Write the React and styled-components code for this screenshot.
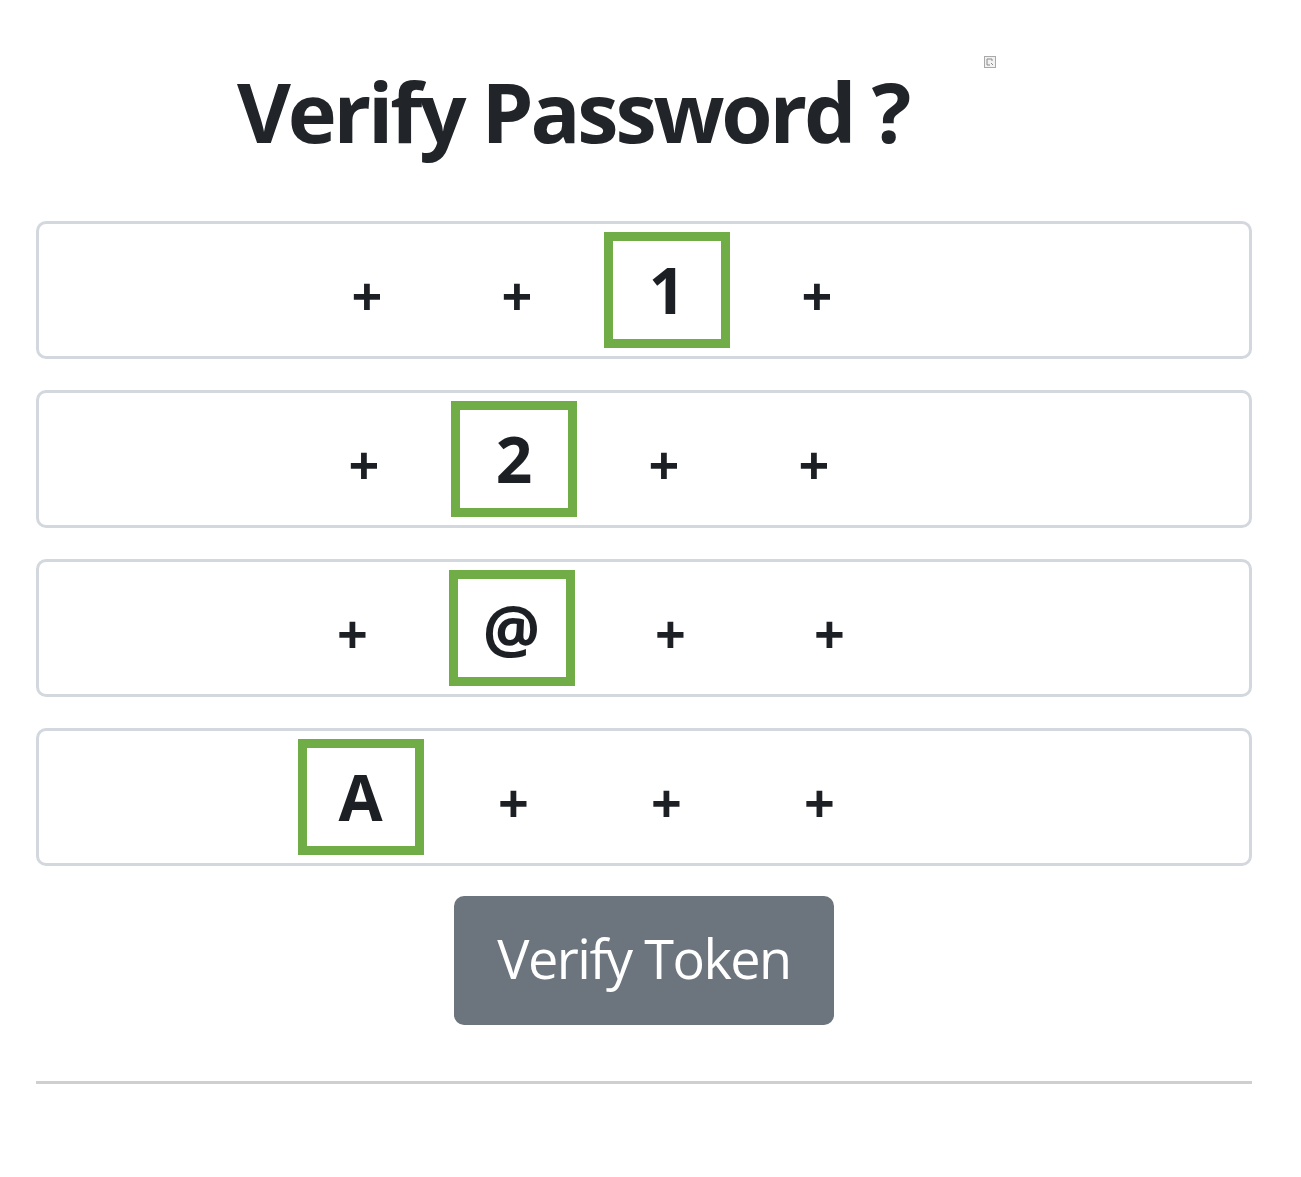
import React from "react";
import styled, { createGlobalStyle } from "styled-components";

const Global = createGlobalStyle`
  html, body { margin: 0; padding: 0; background: #ffffff; }
  body { font-family: "Open Sans", "Noto Sans", sans-serif; color: #212529; }
`;

const Page = styled.div`
  width: 1301px;
  min-height: 1177px;
  padding: 0 49px 0 36px;
  box-sizing: border-box;
  display: flex;
  flex-direction: column;
`;

const Header = styled.header`
  display: flex;
  align-items: flex-start;
  padding: 56px 0 0 201px;
  height: 221px;
  box-sizing: border-box;
`;

const Title = styled.h1`
  margin: 13px 0 0 0;
  font-size: 83px;
  line-height: 1;
  font-weight: 700;
  color: #212529;
  letter-spacing: -3.2px;
  white-space: nowrap;
`;

const BrokenImg = styled.span`
  display: inline-flex;
  margin-left: 76px;
  width: 12px;
  height: 12px;
`;

const Rows = styled.div`
  display: flex;
  flex-direction: column;
  gap: 31px;
`;

const Card = styled.div`
  height: 138px;
  box-sizing: border-box;
  border: 3px solid #d3d8de;
  border-radius: 10px;
  display: flex;
  align-items: center;
  justify-content: center;
  padding-right: ${(p) => p.$shift}px;
  gap: ${(p) => p.$gap}px;
`;

const Cell = styled.div`
  width: 126px;
  height: 116px;
  box-sizing: border-box;
  border: 9px solid ${(p) => (p.$mark ? "#70ad47" : "transparent")};
  display: flex;
  align-items: center;
  justify-content: center;
  font-size: ${(p) => (p.$mark ? 64 : 54)}px;
  font-weight: 700;
  line-height: 1;
  color: #1c1f24;
  padding-top: ${(p) => (p.$mark ? 0 : 10)}px;
`;

const ButtonRow = styled.div`
  display: flex;
  justify-content: center;
  margin-top: 30px;
`;

const Button = styled.button`
  width: 380px;
  height: 129px;
  border: none;
  border-radius: 10px;
  background: #6c757d;
  color: #ffffff;
  font-family: "Open Sans", "Noto Sans", sans-serif;
  font-size: 54px;
  font-weight: 400;
  letter-spacing: -1.5px;
  cursor: pointer;
  padding: 0 0 6px 0;
`;

const Rule = styled.hr`
  margin: 56px 0 0 0;
  border: none;
  border-top: 3px solid #cfcfcf;
  height: 0;
`;

const rows = [
  { gap: 24, shift: 104, cells: ["+", "+", "1", "+"], mark: 2 },
  { gap: 24, shift: 110, cells: ["+", "2", "+", "+"], mark: 1 },
  { gap: 33, shift: 106, cells: ["+", "@", "+", "+"], mark: 1 },
  { gap: 27, shift: 108, cells: ["A", "+", "+", "+"], mark: 0 },
];

export default function App() {
  return (
    <>
      <Global />
      <Page>
        <Header>
          <Title>Verify Password ?</Title>
          <BrokenImg>
            <svg width="12" height="12" viewBox="0 0 12 12">
              <rect x="0.5" y="0.5" width="11" height="11" fill="#f2f2f2" stroke="#a9a9a9" />
              <path d="M3 3h5v2M3 3v6h3" fill="none" stroke="#8a8a8a" strokeWidth="1" />
              <path d="M7 7l2 2" stroke="#8a8a8a" strokeWidth="1" />
            </svg>
          </BrokenImg>
        </Header>
        <Rows>
          {rows.map((r, i) => (
            <Card key={i} $gap={r.gap} $shift={r.shift}>
              {r.cells.map((c, j) => (
                <Cell key={j} $mark={j === r.mark}>
                  {c}
                </Cell>
              ))}
            </Card>
          ))}
        </Rows>
        <ButtonRow>
          <Button>Verify Token</Button>
        </ButtonRow>
        <Rule />
      </Page>
    </>
  );
}
